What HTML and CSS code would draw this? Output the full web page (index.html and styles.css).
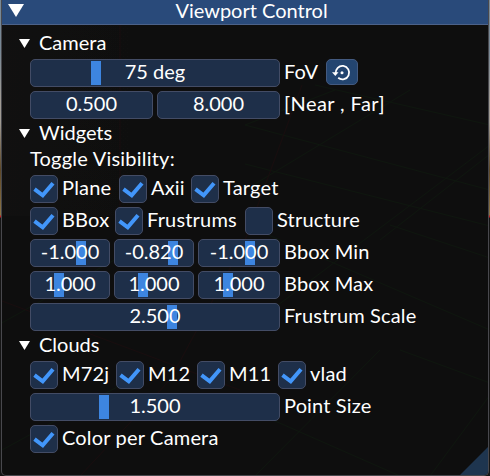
FILE: index.html
```
<!DOCTYPE html>
<html lang="en">
<head>
<meta charset="utf-8">
<title>Viewport Control</title>
<link rel="stylesheet" href="styles.css">
</head>
<body>
<svg width="0" height="0" class="defs"><defs>
<symbol id="check" viewBox="0 0 28 28"><path d="M4.5 14.2 L12.7 20.3 L23 8.2" fill="none" stroke="#4296fa" stroke-width="4"/></symbol>
</defs></svg>
<main class="window">
  <svg class="scene" viewBox="0 0 490 476" fill="none">
    <path stroke="#102010" d="M245 125L490 190M245 164L490 226M315 85L490 125M335 90L245 125M490 154L380 240M410 90L245 190M490 145L245 330M490 258L390 225M245 225L490 330M380 350L255 476M490 395L430 476M400 350L490 383M250 410L400 476M0 324L150 240M2 450L130 380"/>
    <path stroke="#240d10" d="M302 85L245 240L170 380L80 476M2 301L240 390M120 25L120 215"/>
  </svg>
  <header class="title"><svg class="title-arrow" viewBox="0 0 16 13"><path fill="#fff" d="M0 0H16L8 13Z"/></svg><h1>Viewport Control</h1></header>
  <div class="body">
    <h2><i class="arrow"></i><span>Camera</span></h2>
    <div class="row"><div class="fields"><div class="field"><i class="grab" style="left:60px"></i><span>75 deg</span></div></div><span class="label fov">FoV</span>
      <button class="reset" aria-label="Reset"><svg viewBox="0 0 32 26"><g fill="none" stroke="#fff" stroke-width="1.8"><path d="M9.8 14.5A6.7 6.7 0 1 1 12.2 18.8"/></g><path fill="#fff" d="M6 13.2H12.5L9.3 17Z"/><circle cx="16" cy="13.8" r="1.5" fill="#fff"/></svg></button></div>
    <div class="row"><div class="fields"><div class="field"><span>0.500</span></div><div class="field"><span>8.000</span></div></div><span class="label near">[Near , Far]</span></div>
    <h2><i class="arrow"></i><span>Widgets</span></h2>
    <p>Toggle Visibility:</p>
    <div class="row checks a">
      <label><i class="box"><svg><use href="#check"/></svg></i><span>Plane</span></label>
      <label><i class="box"><svg><use href="#check"/></svg></i><span>Axii</span></label>
      <label><i class="box"><svg><use href="#check"/></svg></i><span>Target</span></label>
    </div>
    <div class="row checks b">
      <label><i class="box"><svg><use href="#check"/></svg></i><span>BBox</span></label>
      <label><i class="box"><svg><use href="#check"/></svg></i><span>Frustrums</span></label>
      <label><i class="box"></i><span>Structure</span></label>
    </div>
    <div class="row"><div class="fields three"><div class="field"><i class="grab" style="left:45px"></i><span>-1.000</span></div><div class="field"><i class="grab" style="left:53px"></i><span>-0.820</span></div><div class="field"><i class="grab" style="left:46px"></i><span>-1.000</span></div></div><span class="label">Bbox Min</span></div>
    <div class="row"><div class="fields three"><div class="field"><i class="grab" style="left:23px"></i><span>1.000</span></div><div class="field"><i class="grab" style="left:23px"></i><span>1.000</span></div><div class="field"><i class="grab" style="left:24px"></i><span>1.000</span></div></div><span class="label">Bbox Max</span></div>
    <div class="row"><div class="fields"><div class="field"><i class="grab" style="left:136px"></i><span>2.500</span></div></div><span class="label">Frustrum Scale</span></div>
    <h2><i class="arrow"></i><span>Clouds</span></h2>
    <div class="row checks c">
      <label><i class="box"><svg><use href="#check"/></svg></i><span>M72j</span></label>
      <label><i class="box"><svg><use href="#check"/></svg></i><span>M12</span></label>
      <label><i class="box"><svg><use href="#check"/></svg></i><span>M11</span></label>
      <label><i class="box"><svg><use href="#check"/></svg></i><span>vlad</span></label>
    </div>
    <div class="row"><div class="fields"><div class="field"><i class="grab" style="left:68px"></i><span>1.500</span></div></div><span class="label">Point Size</span></div>
    <div class="row checks"><label><i class="box"><svg><use href="#check"/></svg></i><span>Color per Camera</span></label></div>
  </div>
  <i class="grip"></i>
</main>
</body>
</html>
```
FILE: styles.css
```
* { box-sizing: border-box; }
html { background: #101010; }
body {
  margin: 0; width: 490px; height: 476px; overflow: hidden; color: #fff;
  font: 20px/22px Lato, "Noto Sans", sans-serif;
  background: linear-gradient(#788895 0 50px, #a09b94 100px 122px, #5e4827 170px, #8b7345 215px, #c01c24 216px 217px, #151515 218px);
}
.defs { position: absolute; }
.window {
  position: relative; width: 488px; height: 476px; margin-left: 1px; overflow: hidden;
  background: linear-gradient(90deg, #17151350, transparent 130px) 0 0 / 100% 216px no-repeat, #0f0f0f;
  border: 1px solid #48484d; border-top: 0; border-radius: 0 0 5px 5px;
}
.scene { position: absolute; left: -2px; top: 0; width: 490px; height: 476px; opacity: .5; }
.title {
  position: relative; display: flex; align-items: flex-start; height: 25px;
  background: #294a7a; border-bottom: 1px solid #4c6289;
}
.title-arrow { width: 16px; height: 13px; margin: 4px 0 0 6px; }
h1, h2, p { margin: 0; font-size: 20px; font-weight: 400; line-height: 18px; }
h1 { flex: 1; text-align: center; margin-left: -22px; padding-left: 13px; line-height: 20px; }
.body { position: relative; display: flex; flex-direction: column; gap: 4px; padding: 8px 0 0 28px; }
h2 { display: flex; align-items: flex-start; margin-left: -11px; height: 22px; }
h2 span { margin-left: 9px; }
p { height: 22px; letter-spacing: .22px; }
.arrow { width: 11px; height: 9px; margin-top: 6px; background: #fff; clip-path: polygon(0 0, 100% 0, 50% 100%); }
.row { display: flex; height: 28px; }
.fields { display: grid; grid-auto-flow: column; grid-auto-columns: 1fr; gap: 4px; width: 250px; }
.fields.three { grid-template-columns: 80px 80px 82px; }
.field { position: relative; text-align: center; line-height: 22px; }
.field, .box { background: #1e2f49; border: 1px solid #434c65; border-radius: 5px; }
.grab { position: absolute; top: 1px; width: 10px; height: 24px; background: #3d85e0; }
.field span { position: relative; }
.label { margin-left: 4px; line-height: 24px; white-space: nowrap; letter-spacing: .15px; }
.near { letter-spacing: .42px; }
.fov { width: 42px; }
.reset { width: 32px; height: 26px; padding: 0; border: 1px solid #435a80; border-radius: 5px; background: #234570; }
.reset svg { display: block; width: 32px; height: 26px; margin: -1px; }
.checks { display: grid; letter-spacing: .18px; }
.a { grid-template-columns: 89px 72px 100px; }
.b { grid-template-columns: 85px 130px 120px; }
.c { grid-template-columns: 86px 81px 81px 80px; }
label { display: flex; white-space: nowrap; line-height: 24px; }
.box { width: 28px; height: 28px; margin-right: 4px; flex: none; }
.box svg { display: block; width: 28px; height: 28px; margin: -1px; }
.grip { position: absolute; right: 0; bottom: 0; width: 28px; height: 28px; background: #1e354f; clip-path: polygon(100% 0, 100% 100%, 0 100%); }
```
